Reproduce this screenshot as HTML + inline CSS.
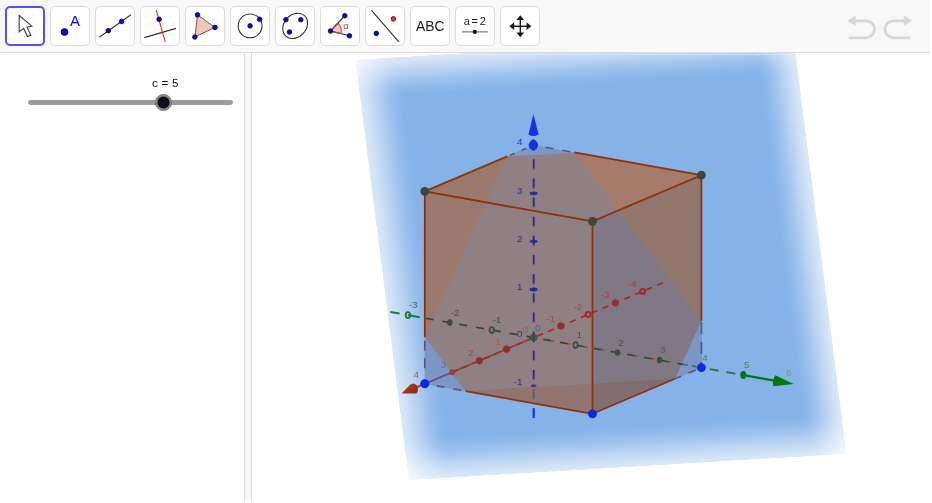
<!DOCTYPE html>
<html><head><meta charset="utf-8"><title>GeoGebra</title>
<style>
html,body{margin:0;padding:0;background:#fff;}
body{width:932px;height:503px;position:relative;overflow:hidden;font-family:"Liberation Sans",sans-serif;}
#toolbar{position:absolute;left:0;top:0;width:930px;height:52px;background:#f8f8f8;border-bottom:1px solid #dcdcdc;}
.tb{position:absolute;top:6px;width:38px;height:38px;border:1px solid #dcdcdc;border-radius:5px;background:#fff;overflow:hidden;}
.tb svg{position:absolute;left:-1px;top:-1px;will-change:transform;}
.tb.sel{border:2px solid #5050ff;width:36px;height:36px;border-radius:5px;}
.tb.sel svg{left:-2px;top:-2px;}
.ur{position:absolute;left:840px;top:8px;}
#dots{position:absolute;left:0;top:54px;width:930px;height:0;border-top:1px dotted #ededed;}
#split{position:absolute;left:244px;top:53px;width:6px;height:448px;background:#f8f8f8;border-left:1px solid #dcdcdc;border-right:1px solid #dcdcdc;}
#scene{position:absolute;left:0;top:0;will-change:transform;}
#scene text{font-family:"Liberation Sans",sans-serif;}
.tb text{font-family:"Liberation Sans",sans-serif;}
#slabel{position:absolute;left:151.6px;top:75.7px;font-size:11.7px;line-height:14px;color:#0a0a0a;white-space:pre;word-spacing:0.45px;will-change:transform;}
#track{position:absolute;left:28px;top:100px;width:205px;height:4.8px;border-radius:2.4px;background:#9b9b9b;}
#knob{position:absolute;left:155.3px;top:93.9px;width:17px;height:17px;}
</style></head>
<body>
<svg id="scene" width="932" height="503" viewBox="0 0 932 503">
<defs>
<linearGradient id="fl" x1="0" x2="1" y1="0" y2="0"><stop offset="0.000" stop-color="#4c4c4c"/><stop offset="0.100" stop-color="#5c5c5c"/><stop offset="0.200" stop-color="#707070"/><stop offset="0.300" stop-color="#878787"/><stop offset="0.400" stop-color="#9f9f9f"/><stop offset="0.500" stop-color="#b8b8b8"/><stop offset="0.600" stop-color="#cccccc"/><stop offset="0.700" stop-color="#e2e2e2"/><stop offset="0.800" stop-color="#f2f2f2"/><stop offset="0.900" stop-color="#fcfcfc"/><stop offset="1.000" stop-color="#ffffff"/></linearGradient>
<linearGradient id="fr" x1="1" x2="0" y1="0" y2="0"><stop offset="0.000" stop-color="#4c4c4c"/><stop offset="0.100" stop-color="#5c5c5c"/><stop offset="0.200" stop-color="#707070"/><stop offset="0.300" stop-color="#878787"/><stop offset="0.400" stop-color="#9f9f9f"/><stop offset="0.500" stop-color="#b8b8b8"/><stop offset="0.600" stop-color="#cccccc"/><stop offset="0.700" stop-color="#e2e2e2"/><stop offset="0.800" stop-color="#f2f2f2"/><stop offset="0.900" stop-color="#fcfcfc"/><stop offset="1.000" stop-color="#ffffff"/></linearGradient>
<linearGradient id="ft" x1="0" x2="0" y1="0" y2="1"><stop offset="0.000" stop-color="#4c4c4c"/><stop offset="0.100" stop-color="#5c5c5c"/><stop offset="0.200" stop-color="#707070"/><stop offset="0.300" stop-color="#878787"/><stop offset="0.400" stop-color="#9f9f9f"/><stop offset="0.500" stop-color="#b8b8b8"/><stop offset="0.600" stop-color="#cccccc"/><stop offset="0.700" stop-color="#e2e2e2"/><stop offset="0.800" stop-color="#f2f2f2"/><stop offset="0.900" stop-color="#fcfcfc"/><stop offset="1.000" stop-color="#ffffff"/></linearGradient>
<linearGradient id="fb" x1="0" x2="0" y1="1" y2="0"><stop offset="0.000" stop-color="#4c4c4c"/><stop offset="0.100" stop-color="#5c5c5c"/><stop offset="0.200" stop-color="#707070"/><stop offset="0.300" stop-color="#878787"/><stop offset="0.400" stop-color="#9f9f9f"/><stop offset="0.500" stop-color="#b8b8b8"/><stop offset="0.600" stop-color="#cccccc"/><stop offset="0.700" stop-color="#e2e2e2"/><stop offset="0.800" stop-color="#f2f2f2"/><stop offset="0.900" stop-color="#fcfcfc"/><stop offset="1.000" stop-color="#ffffff"/></linearGradient>
<radialGradient id="ctl" gradientUnits="userSpaceOnUse" cx="0" cy="0" r="1.5" gradientTransform="translate(47.50 42.00) scale(47.50 42.00)"><stop offset="0.0000" stop-color="#ffffff"/><stop offset="0.0667" stop-color="#fcfcfc"/><stop offset="0.1333" stop-color="#f2f2f2"/><stop offset="0.2000" stop-color="#e2e2e2"/><stop offset="0.2667" stop-color="#cccccc"/><stop offset="0.3333" stop-color="#b8b8b8"/><stop offset="0.4000" stop-color="#9f9f9f"/><stop offset="0.4667" stop-color="#878787"/><stop offset="0.5333" stop-color="#707070"/><stop offset="0.6000" stop-color="#5c5c5c"/><stop offset="0.6667" stop-color="#4c4c4c"/><stop offset="0.8000" stop-color="#2b2b2b"/><stop offset="0.9427" stop-color="#141414"/><stop offset="1.0000" stop-color="#0d0d0d"/></radialGradient>
<radialGradient id="ctr" gradientUnits="userSpaceOnUse" cx="0" cy="0" r="1.5" gradientTransform="translate(395.99 42.00) scale(43.00 42.00)"><stop offset="0.0000" stop-color="#ffffff"/><stop offset="0.0667" stop-color="#fcfcfc"/><stop offset="0.1333" stop-color="#f2f2f2"/><stop offset="0.2000" stop-color="#e2e2e2"/><stop offset="0.2667" stop-color="#cccccc"/><stop offset="0.3333" stop-color="#b8b8b8"/><stop offset="0.4000" stop-color="#9f9f9f"/><stop offset="0.4667" stop-color="#878787"/><stop offset="0.5333" stop-color="#707070"/><stop offset="0.6000" stop-color="#5c5c5c"/><stop offset="0.6667" stop-color="#4c4c4c"/><stop offset="0.8000" stop-color="#2b2b2b"/><stop offset="0.9427" stop-color="#141414"/><stop offset="1.0000" stop-color="#0d0d0d"/></radialGradient>
<radialGradient id="cbl" gradientUnits="userSpaceOnUse" cx="0" cy="0" r="1.5" gradientTransform="translate(47.50 379.20) scale(47.50 45.00)"><stop offset="0.0000" stop-color="#ffffff"/><stop offset="0.0667" stop-color="#fcfcfc"/><stop offset="0.1333" stop-color="#f2f2f2"/><stop offset="0.2000" stop-color="#e2e2e2"/><stop offset="0.2667" stop-color="#cccccc"/><stop offset="0.3333" stop-color="#b8b8b8"/><stop offset="0.4000" stop-color="#9f9f9f"/><stop offset="0.4667" stop-color="#878787"/><stop offset="0.5333" stop-color="#707070"/><stop offset="0.6000" stop-color="#5c5c5c"/><stop offset="0.6667" stop-color="#4c4c4c"/><stop offset="0.8000" stop-color="#2b2b2b"/><stop offset="0.9427" stop-color="#141414"/><stop offset="1.0000" stop-color="#0d0d0d"/></radialGradient>
<radialGradient id="cbr" gradientUnits="userSpaceOnUse" cx="0" cy="0" r="1.5" gradientTransform="translate(395.99 379.20) scale(43.00 45.00)"><stop offset="0.0000" stop-color="#ffffff"/><stop offset="0.0667" stop-color="#fcfcfc"/><stop offset="0.1333" stop-color="#f2f2f2"/><stop offset="0.2000" stop-color="#e2e2e2"/><stop offset="0.2667" stop-color="#cccccc"/><stop offset="0.3333" stop-color="#b8b8b8"/><stop offset="0.4000" stop-color="#9f9f9f"/><stop offset="0.4667" stop-color="#878787"/><stop offset="0.5333" stop-color="#707070"/><stop offset="0.6000" stop-color="#5c5c5c"/><stop offset="0.6667" stop-color="#4c4c4c"/><stop offset="0.8000" stop-color="#2b2b2b"/><stop offset="0.9427" stop-color="#141414"/><stop offset="1.0000" stop-color="#0d0d0d"/></radialGradient>
<mask id="pm" maskUnits="userSpaceOnUse" x="0" y="0" width="438.99" height="424.20" maskContentUnits="userSpaceOnUse">
<rect x="0" y="0" width="438.99" height="424.20" fill="#000"/>
<rect x="46.90" y="41.40" width="349.69" height="338.40" fill="#fff"/>
<rect x="0" y="41.40" width="47.50" height="338.40" fill="url(#fl)"/>
<rect x="395.99" y="41.40" width="43.00" height="338.40" fill="url(#fr)"/>
<rect x="46.90" y="0" width="349.69" height="42.00" fill="url(#ft)"/>
<rect x="46.90" y="379.20" width="349.69" height="45.00" fill="url(#fb)"/>
<rect x="0" y="0" width="47.50" height="42.00" fill="url(#ctl)"/>
<rect x="395.99" y="0" width="43.00" height="42.00" fill="url(#ctr)"/>
<rect x="0" y="379.20" width="47.50" height="45.00" fill="url(#cbl)"/>
<rect x="395.99" y="379.20" width="43.00" height="45.00" fill="url(#cbr)"/>
</mask>
<linearGradient id="xcone" gradientUnits="userSpaceOnUse" x1="405" y1="386" x2="417" y2="393"><stop offset="0" stop-color="#a8400f"/><stop offset="1" stop-color="#862a1c"/></linearGradient>
<clipPath id="view"><rect x="252" y="53" width="680" height="448"/></clipPath>
</defs>
<g clip-path="url(#view)">
<g transform="matrix(0.99820,-0.05991,0.12636,0.99199,355.00,59.50)">
<rect x="0" y="0" width="438.99" height="424.20" fill="#85b3e8" mask="url(#pm)"/>
</g>
<polygon points="424.82,383.80 592.50,413.80 592.50,221.40 424.82,191.40" fill="#8f8084" />
<polygon points="424.82,191.40 592.50,221.40 701.38,175.20 533.70,145.20" fill="#8f8084" />
<polygon points="592.50,413.80 701.38,367.60 701.38,175.20 592.50,221.40" fill="#807884" />
<polygon points="424.82,191.40 424.82,337.14 486.31,202.40" fill="#9b796c" />
<polygon points="486.31,202.40 507.30,156.40 424.82,191.40" fill="#9b796c" />
<polygon points="701.38,175.20 574.36,152.48 618.13,210.52" fill="#a57c6b" />
<polygon points="701.38,175.20 618.13,210.52 701.38,320.94" fill="#92786c" />
<polygon points="592.50,413.80 592.50,383.63 465.48,391.07" fill="#907570" />
<polygon points="674.98,378.80 592.50,383.63 592.50,413.80" fill="#806e6e" />
<polygon points="465.48,391.07 424.82,337.14 424.82,383.80" fill="#7d96c8" />
<polygon points="533.70,145.20 507.30,156.40 574.36,152.48" fill="#7d96c8" />
<polygon points="701.38,367.60 701.38,320.94 674.98,378.80" fill="#7d96c8" />
<line x1="390.33" y1="311.95" x2="399.56" y2="313.60" stroke="#1e7a3c" stroke-width="2" />
<line x1="407.94" y1="315.10" x2="419.68" y2="317.20" stroke="#1e7a3c" stroke-width="2" />
<line x1="425.59" y1="318.26" x2="682.94" y2="364.30" stroke="#2f4a30" stroke-width="1.7" stroke-dasharray="8.0 9.07" />
<line x1="542.08" y1="339.10" x2="680.42" y2="363.85" stroke="#a44a38" stroke-width="1.5" stroke-dasharray="3.0 14.07" stroke-dashoffset="-9.15"/>
<line x1="682.94" y1="364.30" x2="697.19" y2="366.85" stroke="#3c7a62" stroke-width="1.9" stroke-dasharray="5 4" />
<line x1="709.76" y1="369.10" x2="741.20" y2="374.73" stroke="#24703a" stroke-width="1.7" stroke-dasharray="9 8" />
<line x1="743.30" y1="375.10" x2="774.74" y2="380.73" stroke="#00780a" stroke-width="2.3" />
<line x1="533.70" y1="337.60" x2="662.86" y2="282.80" stroke="#b02624" stroke-width="1.7" stroke-dasharray="6.3 5.54" stroke-dashoffset="-3.8"/>
<line x1="533.70" y1="337.60" x2="452.04" y2="372.25" stroke="#84443c" stroke-width="1.6" />
<line x1="533.70" y1="337.60" x2="452.04" y2="372.25" stroke="#a82a26" stroke-width="1.7" stroke-dasharray="6.8 5.1" />
<line x1="452.04" y1="372.25" x2="424.82" y2="383.80" stroke="#62527e" stroke-width="1.8" />
<line x1="424.82" y1="383.80" x2="412.57" y2="389.00" stroke="#a8401c" stroke-width="2" />
<line x1="533.70" y1="140.10" x2="533.70" y2="380.00" stroke="#2a2692" stroke-width="1.8" stroke-dasharray="10 9.15" />
<line x1="533.70" y1="149.10" x2="533.70" y2="380.00" stroke="#b05c34" stroke-width="1.7" stroke-dasharray="1.4 17.75" />
<line x1="533.70" y1="389.05" x2="533.70" y2="399.00" stroke="#5e5494" stroke-width="1.5" />
<line x1="533.70" y1="408.20" x2="533.70" y2="418.00" stroke="#1430e6" stroke-width="2.2" />
<line x1="424.82" y1="191.40" x2="592.50" y2="221.40" stroke="#903208" stroke-width="1.75" />
<line x1="592.50" y1="221.40" x2="701.38" y2="175.20" stroke="#903208" stroke-width="1.75" />
<line x1="592.50" y1="221.40" x2="592.50" y2="413.80" stroke="#903208" stroke-width="1.75" />
<line x1="424.82" y1="191.40" x2="424.82" y2="337.14" stroke="#903208" stroke-width="1.75" />
<line x1="701.38" y1="175.20" x2="701.38" y2="320.94" stroke="#903208" stroke-width="1.75" />
<line x1="465.48" y1="391.07" x2="592.50" y2="413.80" stroke="#903208" stroke-width="1.75" />
<line x1="592.50" y1="413.80" x2="674.98" y2="378.80" stroke="#903208" stroke-width="1.75" />
<line x1="424.82" y1="191.40" x2="507.30" y2="156.40" stroke="#903208" stroke-width="1.75" />
<line x1="574.36" y1="152.47" x2="701.38" y2="175.20" stroke="#903208" stroke-width="1.75" />
<line x1="424.82" y1="337.14" x2="424.82" y2="374.80" stroke="#5e5478" stroke-width="1.7" stroke-dasharray="10 7.5" stroke-dashoffset="-3.5"/>
<line x1="424.82" y1="383.80" x2="465.48" y2="391.07" stroke="#5e5478" stroke-width="1.6" stroke-dasharray="8 9" stroke-dashoffset="-12"/>
<line x1="701.38" y1="320.94" x2="701.38" y2="367.60" stroke="#5e5478" stroke-width="1.7" stroke-dasharray="12 8" stroke-dashoffset="-1"/>
<line x1="701.38" y1="367.60" x2="674.98" y2="378.80" stroke="#5e5478" stroke-width="1.6" stroke-dasharray="8 8" stroke-dashoffset="-6"/>
<line x1="507.30" y1="156.40" x2="533.70" y2="145.20" stroke="#5e5478" stroke-width="1.6" stroke-dasharray="5 7.5" stroke-dashoffset="-3"/>
<line x1="533.70" y1="145.20" x2="574.36" y2="152.47" stroke="#5e5478" stroke-width="1.6" stroke-dasharray="8 9" stroke-dashoffset="-12"/>
<circle cx="560.92" cy="326.05" r="3.3" fill="#8c302e" stroke="#a22e28" stroke-width="0.8"/>
<circle cx="615.36" cy="302.95" r="3.3" fill="#8c302e" stroke="#a22e28" stroke-width="0.8"/>
<circle cx="588.14" cy="314.50" r="2.45" fill="none" stroke="#9a2e2a" stroke-width="2.1"/>
<circle cx="642.58" cy="291.40" r="2.45" fill="none" stroke="#9a2e2a" stroke-width="2.1"/>
<circle cx="506.48" cy="349.15" r="3.3" fill="#8e2c2a" stroke="#a42e28" stroke-width="0.8"/>
<circle cx="479.26" cy="360.70" r="3.3" fill="#8e2c2a" stroke="#a42e28" stroke-width="0.8"/>
<circle cx="452.04" cy="372.25" r="3.0" fill="#8c4444" />
<ellipse cx="449.86" cy="322.60" rx="2.7" ry="3.3" fill="#34503a" />
<ellipse cx="617.54" cy="352.60" rx="2.7" ry="3.3" fill="#34503a" />
<ellipse cx="659.46" cy="360.10" rx="2.7" ry="3.3" fill="#34503a" />
<ellipse cx="491.78" cy="330.10" rx="2.2" ry="3.0" fill="none" stroke="#34503a" stroke-width="1.7"/>
<ellipse cx="575.62" cy="345.10" rx="2.2" ry="3.0" fill="none" stroke="#34503a" stroke-width="1.7"/>
<ellipse cx="407.94" cy="315.10" rx="2.2" ry="3.0" fill="none" stroke="#1e7a3c" stroke-width="1.8"/>
<ellipse cx="743.30" cy="375.10" rx="3.0" ry="4.0" fill="#00780a" />
<ellipse cx="533.70" cy="289.50" rx="4.0" ry="1.9" fill="#2e2a96" />
<ellipse cx="533.70" cy="193.30" rx="4.0" ry="1.9" fill="#2e2a96" />
<ellipse cx="533.70" cy="385.70" rx="2.9" ry="1.5" fill="#38329a" />
<ellipse cx="533.70" cy="241.40" rx="4.0" ry="1.3" fill="#2e2a96" />
<ellipse cx="533.70" cy="241.40" rx="1.4" ry="2.6" fill="#2e2a96" />
<circle cx="533.70" cy="337.60" r="3.8" fill="#3e5a40" />
<line x1="533.70" y1="332.50" x2="533.70" y2="342.50" stroke="#3a3690" stroke-width="1.5" />
<path d="M533.4 113.9 L538.6 134.6 Q533.6 137.6 528.5 134.6 Z" fill="#1432e6"/>
<path d="M793.7 384.1 L775.4 375.3 Q771.8 380.6 773.4 386.3 Z" fill="#00780a"/>
<path d="M401.6 393.4 L409.8 385.0 Q411.8 383.3 413.7 383.4 Q416.8 384.1 417.9 387.4 Q418.5 390.7 416.4 393.5 Z" fill="url(#xcone)"/>
<circle cx="424.82" cy="191.40" r="4.4" fill="#3c483c" />
<circle cx="592.50" cy="221.40" r="4.4" fill="#3c483c" />
<circle cx="701.38" cy="175.20" r="4.4" fill="#3c483c" />
<circle cx="424.82" cy="383.80" r="4.5" fill="#0a28e6" />
<circle cx="592.50" cy="413.80" r="4.4" fill="#0a28e6" />
<circle cx="701.38" cy="367.60" r="4.4" fill="#0a28e6" />
<path d="M533.4 138.9 C536.0 140.5 538.1 142.3 538.1 144.9 C538.1 147.5 536.0 149.3 533.4 150.9 C530.8 149.3 528.6999999999999 147.5 528.6999999999999 144.9 C528.6999999999999 142.3 530.8 140.5 533.4 138.9 Z" fill="#1432dc"/>
<text x="555.12" y="321.55" fill="#aa4630" font-size="9.8" text-anchor="end">-1</text>
<text x="582.34" y="310.00" fill="#aa4630" font-size="9.8" text-anchor="end">-2</text>
<text x="609.56" y="298.45" fill="#aa4630" font-size="9.8" text-anchor="end">-3</text>
<text x="636.78" y="286.90" fill="#aa4630" font-size="9.8" text-anchor="end">-4</text>
<text x="500.68" y="344.65" fill="#b25a38" font-size="9.8" text-anchor="end">1</text>
<text x="473.46" y="356.20" fill="#aa4630" font-size="9.8" text-anchor="end">2</text>
<text x="446.24" y="367.75" fill="#806058" font-size="9.8" text-anchor="end">3</text>
<text x="419.02" y="378.20" fill="#b25a38" font-size="9.8" text-anchor="end">4</text>
<text x="528.20" y="333.00" fill="#b25a38" font-size="9.8" text-anchor="end">0</text>
<text x="408.74" y="308.30" fill="#2e8040" font-size="9.8" text-anchor="start">-3</text>
<text x="450.66" y="315.80" fill="#45583f" font-size="9.8" text-anchor="start">-2</text>
<text x="492.58" y="323.30" fill="#45583f" font-size="9.8" text-anchor="start">-1</text>
<text x="576.42" y="338.30" fill="#45583f" font-size="9.8" text-anchor="start">1</text>
<text x="618.34" y="345.80" fill="#45583f" font-size="9.8" text-anchor="start">2</text>
<text x="660.26" y="353.30" fill="#4f624a" font-size="9.8" text-anchor="start">3</text>
<text x="702.18" y="360.80" fill="#3a8a4a" font-size="9.8" text-anchor="start">4</text>
<text x="744.10" y="368.30" fill="#3a8c3c" font-size="9.8" text-anchor="start">5</text>
<text x="535.00" y="330.60" fill="#4a6a4c" font-size="9.8" text-anchor="start">0</text>
<text x="785.90" y="376.10" fill="#78a458" font-size="9.8" text-anchor="start">6</text>
<text x="522.40" y="289.70" fill="#30308c" font-size="9.8" text-anchor="end">1</text>
<text x="522.40" y="241.60" fill="#30308c" font-size="9.8" text-anchor="end">2</text>
<text x="522.40" y="193.50" fill="#30308c" font-size="9.8" text-anchor="end">3</text>
<text x="522.40" y="145.40" fill="#1e32c8" font-size="9.8" text-anchor="end">4</text>
<text x="522.40" y="384.70" fill="#30308c" font-size="9.8" text-anchor="end">-1</text>
<text x="522.40" y="337.00" fill="#30309a" font-size="9.8" text-anchor="end">0</text>
</g>
</svg>
<div id="toolbar">
<div class="tb sel" style="left:5px"><svg width="40" height="40" viewBox="5 6 40 40"><path d="M19.2 15.4 L19.2 31.9 L23.7 28.4 L27.5 36.5 L30.8 35.1 L27.0 27.1 L31.8 26.2 Z" fill="#fff" stroke="#3a3a3a" stroke-width="1.1" stroke-linejoin="miter"/></svg></div>
<div class="tb" style="left:50px"><svg width="40" height="40" viewBox="50 6 40 40"><circle cx="64.5" cy="32" r="3.2" fill="#0000ff" stroke="#101010" stroke-width="1.2"/><text x="70" y="25.7" font-size="15" fill="#0000ff">A</text></svg></div>
<div class="tb" style="left:95px"><svg width="40" height="40" viewBox="95 6 40 40"><line x1="99.3" y1="37.2" x2="130.9" y2="14.7" stroke="#333" stroke-width="1.1"/><circle cx="108.3" cy="30.7" r="2.3" fill="#0000ff" stroke="#1a1a1a" stroke-width="0.9"/><circle cx="121.6" cy="21.5" r="2.3" fill="#0000ff" stroke="#1a1a1a" stroke-width="0.9"/></svg></div>
<div class="tb" style="left:140px"><svg width="40" height="40" viewBox="140 6 40 40"><line x1="144.3" y1="37.6" x2="175.9" y2="28.4" stroke="#333" stroke-width="1.1"/><line x1="156.2" y1="10.1" x2="165.2" y2="41.8" stroke="#ff2020" stroke-width="1.1"/><circle cx="159.1" cy="19.3" r="2.3" fill="#0000ff" stroke="#1a1a1a" stroke-width="0.9"/></svg></div>
<div class="tb" style="left:185px"><svg width="40" height="40" viewBox="185 6 40 40"><polygon points="197.5,14.9 215,27.4 194.9,37" fill="#ebc8be" stroke="#96463c" stroke-width="1"/><circle cx="197.5" cy="14.9" r="2.3" fill="#0000ff" stroke="#1a1a1a" stroke-width="0.9"/><circle cx="215" cy="27.4" r="2.3" fill="#0000ff" stroke="#1a1a1a" stroke-width="0.9"/><circle cx="194.9" cy="37" r="2.3" fill="#0000ff" stroke="#1a1a1a" stroke-width="0.9"/></svg></div>
<div class="tb" style="left:230px"><svg width="40" height="40" viewBox="230 6 40 40"><circle cx="250.1" cy="25.9" r="11.9" fill="none" stroke="#333" stroke-width="1.1"/><circle cx="250.1" cy="25.9" r="2.3" fill="#0000ff" stroke="#1a1a1a" stroke-width="0.9"/><circle cx="259.6" cy="19.3" r="2.3" fill="#0000ff" stroke="#1a1a1a" stroke-width="0.9"/></svg></div>
<div class="tb" style="left:275px"><svg width="40" height="40" viewBox="275 6 40 40"><ellipse cx="295.15" cy="25.85" rx="13.85" ry="11.05" transform="rotate(-47.4 295.15 25.85)" fill="none" stroke="#333" stroke-width="1.1"/><circle cx="285.9" cy="19.7" r="2.3" fill="#0000ff" stroke="#1a1a1a" stroke-width="0.9"/><circle cx="300.8" cy="19.7" r="2.3" fill="#0000ff" stroke="#1a1a1a" stroke-width="0.9"/><circle cx="289.5" cy="32" r="2.3" fill="#0000ff" stroke="#1a1a1a" stroke-width="0.9"/></svg></div>
<div class="tb" style="left:320px"><svg width="40" height="40" viewBox="320 6 40 40"><path d="M330.5 31 L337.8 23.2 A10.7 10.7 0 0 1 340.9 33.6 Z" fill="#f0c8be" stroke="none"/><path d="M337.8 23.2 A10.7 10.7 0 0 1 340.9 33.6" fill="none" stroke="#ff3030" stroke-width="1.1"/><line x1="330.5" y1="31" x2="344.8" y2="15.75" stroke="#333" stroke-width="1.1"/><line x1="330.5" y1="31" x2="349.4" y2="35.8" stroke="#333" stroke-width="1.1"/><line x1="330.5" y1="31" x2="340.9" y2="33.6" stroke="#96463c" stroke-width="1.1"/><line x1="330.5" y1="31" x2="337.8" y2="23.2" stroke="#96463c" stroke-width="1.1"/><circle cx="330.5" cy="31" r="2.3" fill="#0000ff" stroke="#1a1a1a" stroke-width="0.9"/><circle cx="344.8" cy="15.75" r="2.3" fill="#0000ff" stroke="#1a1a1a" stroke-width="0.9"/><circle cx="349.4" cy="35.8" r="2.3" fill="#0000ff" stroke="#1a1a1a" stroke-width="0.9"/><text x="343.3" y="29.0" font-size="9.3" fill="#ff2828">α</text></svg></div>
<div class="tb" style="left:365px"><svg width="40" height="40" viewBox="365 6 40 40"><line x1="371.3" y1="10.1" x2="398.8" y2="41.8" stroke="#333" stroke-width="1.1"/><circle cx="376.3" cy="33.4" r="2.3" fill="#0000ff" stroke="#1a1a1a" stroke-width="0.9"/><circle cx="393.4" cy="18.9" r="2.3" fill="#ff3a1e" stroke="#3a1a1a" stroke-width="0.9"/></svg></div>
<div class="tb" style="left:410px"><svg width="40" height="40" viewBox="410 6 40 40"><text x="430.2" y="31.3" font-size="14.4" fill="#1a1a1a" text-anchor="middle" textLength="28.4" lengthAdjust="spacingAndGlyphs">ABC</text></svg></div>
<div class="tb" style="left:455px"><svg width="40" height="40" viewBox="455 6 40 40"><text x="474.8" y="24.8" font-size="11" fill="#1a1a1a" text-anchor="middle" textLength="22.2">a = 2</text><line x1="462" y1="31.9" x2="488" y2="31.9" stroke="#6a5a5a" stroke-width="1"/><circle cx="474.8" cy="31.9" r="2.1" fill="#111"/></svg></div>
<div class="tb" style="left:500px"><svg width="40" height="40" viewBox="500 6 40 40"><path d="M520.3 18 V34.5 M512 26.2 H528.6" stroke="#1a1a1a" stroke-width="1.4" fill="none"/><path d="M520.3 15.2 l3.9 4.9 h-7.8 z M520.3 37.3 l3.9 -4.9 h-7.8 z M509.3 26.2 l4.9 -3.9 v7.8 z M531.4 26.2 l-4.9 -3.9 v7.8 z" fill="#1a1a1a"/></svg></div>
<svg class="ur" width="80" height="40" viewBox="840 8 80 40"><path d="M855 20.8 H866 A8.5 8.5 0 0 1 866 37.8 H848.8" fill="none" stroke="#d6d6d6" stroke-width="2.7"/><path d="M847.4 20.8 L855.6 15.6 V26 Z" fill="#d6d6d6"/><path d="M904.4 20.8 H893.4 A8.5 8.5 0 0 0 893.4 37.8 H910.4" fill="none" stroke="#d6d6d6" stroke-width="2.7"/><path d="M912 20.8 L903.8 15.6 V26 Z" fill="#d6d6d6"/></svg>
</div>
<div id="dots"></div>
<div id="split"></div>
<div id="slabel">c = 5</div>
<div id="track"></div>
<svg id="knob" viewBox="0 0 17 17"><circle cx="8.5" cy="8.5" r="8.1" fill="#8c8c8c" stroke="#6e6e6e" stroke-width="0.8"/><circle cx="8.5" cy="8.5" r="6.1" fill="#10101c"/></svg>
</body></html>
